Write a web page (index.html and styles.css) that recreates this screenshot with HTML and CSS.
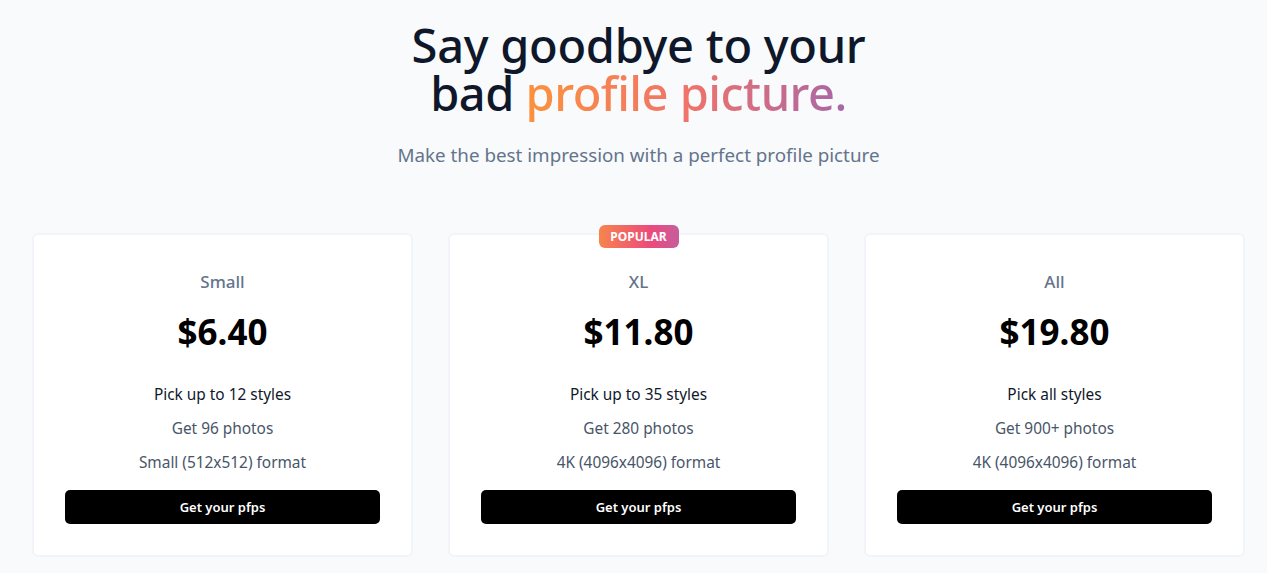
FILE: index.html
```html
<!DOCTYPE html>
<html lang="en">
<head>
<meta charset="utf-8">
<title>Pricing</title>
<link rel="stylesheet" href="styles.css">
</head>
<body>
<main class="page">
  <header class="hero">
    <h1 class="title"><span class="line">Say goodbye to your</span><span class="line">bad <span class="grad">profile picture.</span></span></h1>
    <p class="subtitle">Make the best impression with a perfect profile picture</p>
  </header>
  <section class="plans">
    <div class="card">
      <h2 class="plan-name">Small</h2>
      <div class="price">$6.40</div>
      <ul class="features">
        <li class="feat-main">Pick up to 12 styles</li>
        <li>Get 96 photos</li>
        <li>Small (512x512) format</li>
      </ul>
      <button class="btn">Get your pfps</button>
    </div>
    <div class="card">
      <span class="badge">POPULAR</span>
      <h2 class="plan-name">XL</h2>
      <div class="price">$11.80</div>
      <ul class="features">
        <li class="feat-main">Pick up to 35 styles</li>
        <li>Get 280 photos</li>
        <li>4K (4096x4096) format</li>
      </ul>
      <button class="btn">Get your pfps</button>
    </div>
    <div class="card">
      <h2 class="plan-name">All</h2>
      <div class="price">$19.80</div>
      <ul class="features">
        <li class="feat-main">Pick all styles</li>
        <li>Get 900+ photos</li>
        <li>4K (4096x4096) format</li>
      </ul>
      <button class="btn">Get your pfps</button>
    </div>
  </section>
</main>
</body>
</html>
```

FILE: styles.css
```css
* { box-sizing: border-box; }
html, body { margin: 0; padding: 0; }
body {
  background: #f8fafc;
  font-family: "Noto Sans", "Open Sans", sans-serif;
  color: #0f172a;
}
.page {
  padding: 21px 22px 0 32px;
}
.hero {
  text-align: center;
}
.title {
  margin: 0;
  font-size: 47px;
  line-height: 48px;
  font-weight: 500;
  color: #0f172a;
  letter-spacing: -0.3px;
}
.title .line {
  display: block;
  height: 48px;
}
.title .line + .line {
  letter-spacing: -0.5px;
}
.grad {
  background: linear-gradient(90deg, #fb923c 0%, #f0736a 50%, #a866a8 100%);
  -webkit-background-clip: text;
  background-clip: text;
  color: transparent;
}
.subtitle {
  margin: 24px 0 0;
  font-size: 18.8px;
  line-height: 28px;
  color: #64748b;
}
.plans {
  display: grid;
  grid-template-columns: repeat(3, 381px);
  gap: 35px;
  margin-top: 64px;
}
.card {
  position: relative;
  background: #fff;
  border: 2px solid #f1f5f9;
  border-radius: 6px;
  padding: 33px 31px 31px;
  text-align: center;
  height: 324px;
}
.badge {
  position: absolute;
  top: -10px;
  left: 50%;
  transform: translateX(-50%);
  width: 80px;
  height: 23px;
  line-height: 23px;
  border-radius: 6px;
  background: linear-gradient(90deg, #f7844e 0%, #ec4a7b 65%, #c65d9c 100%);
  color: #fff;
  font-size: 12px;
  font-weight: 700;
}
.plan-name {
  margin: 0;
  font-size: 17px;
  line-height: 28px;
  font-weight: 500;
  color: #64748b;
}
.price {
  margin-top: 16px;
  font-size: 35px;
  line-height: 40px;
  font-weight: 700;
  color: #000;
}
.features {
  list-style: none;
  margin: 31px 0 0;
  padding: 0;
}
.features li {
  font-size: 15.4px;
  line-height: 24px;
  color: #475569;
  margin-bottom: 10px;
}
.features li.feat-main { color: #0f172a; }
.btn {
  display: block;
  width: 100%;
  height: 34px;
  margin-top: 15px;
  border: 0;
  border-radius: 5px;
  background: #000;
  color: #fff;
  font-family: inherit;
  font-size: 13px;
  font-weight: 600;
}
```
